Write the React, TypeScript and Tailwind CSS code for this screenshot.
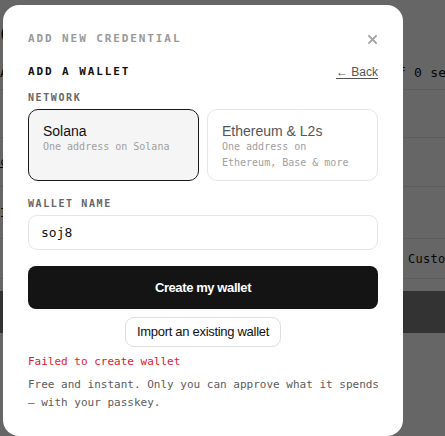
import React from 'react'

const mono = "font-['DejaVu_Sans_Mono',monospace]"
const sans = "font-['Liberation_Sans',Arial,sans-serif]"

type Network = { id: string; name: string; blurb: string }

const networks: Network[] = [
  { id: 'sol', name: 'Solana', blurb: 'One address on Solana' },
  { id: 'evm', name: 'Ethereum & L2s', blurb: 'One address on Ethereum, Base & more' },
]

// the credentials table sitting underneath the dimmed overlay
function PageBehind() {
  return (
    <div className={`h-[436px] overflow-hidden bg-white ${mono} text-[#111]`}>
      <div className="h-[56px] pt-[22px] text-[22px] leading-[26px]">C</div>
      <div className="flex h-[34px] items-center border-b border-[#e5e5e5] text-[13px]">
        <span className="w-[390px] shrink-0">A</span>
        <span className="shrink-0 whitespace-nowrap tracking-[0.2px]">of 0 selected</span>
      </div>
      <div className="h-[48px] border-b border-[#e5e5e5]" />
      <div className="flex h-[49px] items-center border-b border-[#e5e5e5] text-[12px]">
        <span className="underline">c</span>
      </div>
      <div className="flex h-[52px] items-center border-b border-[#e5e5e5] text-[12px]">
        <span>I</span>
      </div>
      <div className="flex h-[40px] items-center border-b border-[#e5e5e5] text-[12px]">
        <span className="w-[408px] shrink-0" />
        <span className="shrink-0 whitespace-nowrap tracking-[0.3px]">Custom</span>
      </div>
      <div className="mt-[12px] h-[42px] bg-[#808080]" />
    </div>
  )
}

function CloseIcon() {
  return (
    <svg width="9" height="9" viewBox="0 0 9 9" className="text-[#a3a3a3]">
      <path d="M1 1L8 8M8 1L1 8" stroke="currentColor" strokeWidth="1.8" strokeLinecap="square" />
    </svg>
  )
}

function NetworkCard({ net, selected }: { net: Network; selected: boolean }) {
  return (
    <div
      className={`h-[72px] flex-1 rounded-[10px] border px-[14px] pt-[13px] ${
        selected ? 'border-[#1a1a1a] bg-[#f5f5f5]' : 'border-[#e6e6e6] bg-white'
      }`}
    >
      <div className={`${sans} text-[14px] leading-[16px] ${selected ? 'text-[#111]' : 'text-[#555]'}`}>
        {net.name}
      </div>
      <div className={`${mono} text-[10px] leading-[16px] text-[#a0a0a0]`}>{net.blurb}</div>
    </div>
  )
}

export default function App() {
  return (
    <div className="relative h-[436px] w-[445px] overflow-hidden">
      <PageBehind />
      <div className="absolute inset-0 bg-black/60" />

      <div className="absolute left-[3px] top-[5px] h-[431px] w-[400px] rounded-[16px] bg-white px-[25px] pt-[26px]">
        <div className="flex h-[16px] items-center justify-between">
          <span className={`${mono} text-[11px] font-bold leading-[16px] tracking-[1.9px] text-[#9a9a9a]`}>
            ADD NEW CREDENTIAL
          </span>
          <span className="mr-[1px]">
            <CloseIcon />
          </span>
        </div>

        <div className="mt-[17px] flex h-[16px] items-center justify-between">
          <span className={`${mono} text-[11px] font-bold leading-[16px] tracking-[1.9px] text-[#111]`}>
            ADD A WALLET
          </span>
          <span className={`${sans} text-[12px] leading-[16px] text-[#555] underline underline-offset-2`}>
            ← Back
          </span>
        </div>

        <div className={`${mono} mt-[11px] text-[10px] font-bold leading-[14px] tracking-[1.6px] text-[#666]`}>
          NETWORK
        </div>

        <div className="mt-[4px] flex gap-[8px]">
          {networks.map(n => (
            <NetworkCard key={n.id} net={n} selected={n.id === 'sol'} />
          ))}
        </div>

        <div className={`${mono} mt-[16px] text-[10px] font-bold leading-[14px] tracking-[1.6px] text-[#666]`}>
          WALLET NAME
        </div>

        <div className="mt-[4px] flex h-[35px] items-center rounded-[9px] border border-[#e6e6e6] pl-[12px]">
          <span className={`${mono} text-[13px] text-[#111]`}>soj8</span>
        </div>

        <button
          className={`${sans} mt-[16px] flex h-[43px] w-full items-center justify-center rounded-[8px] bg-[#141414] text-[13px] font-bold tracking-[-0.4px] text-white`}
        >
          Create my wallet
        </button>

        <div className="mt-[8px] flex justify-center">
          <button
            className={`${sans} h-[30px] w-[156px] rounded-[9px] border border-[#dedede] bg-white text-[13px] tracking-[-0.3px] text-[#111]`}
          >
            Import an existing wallet
          </button>
        </div>

        <div className={`${mono} mt-[7px] text-[11px] leading-[16px] text-[#e3192b]`}>Failed to create wallet</div>

        <p className={`${mono} -mr-[6px] mt-[6px] text-[11px] leading-[18px] text-[#5c5c5c]`}>
          Free and instant. Only you can approve what it spends — with your passkey.
        </p>
      </div>
    </div>
  )
}
